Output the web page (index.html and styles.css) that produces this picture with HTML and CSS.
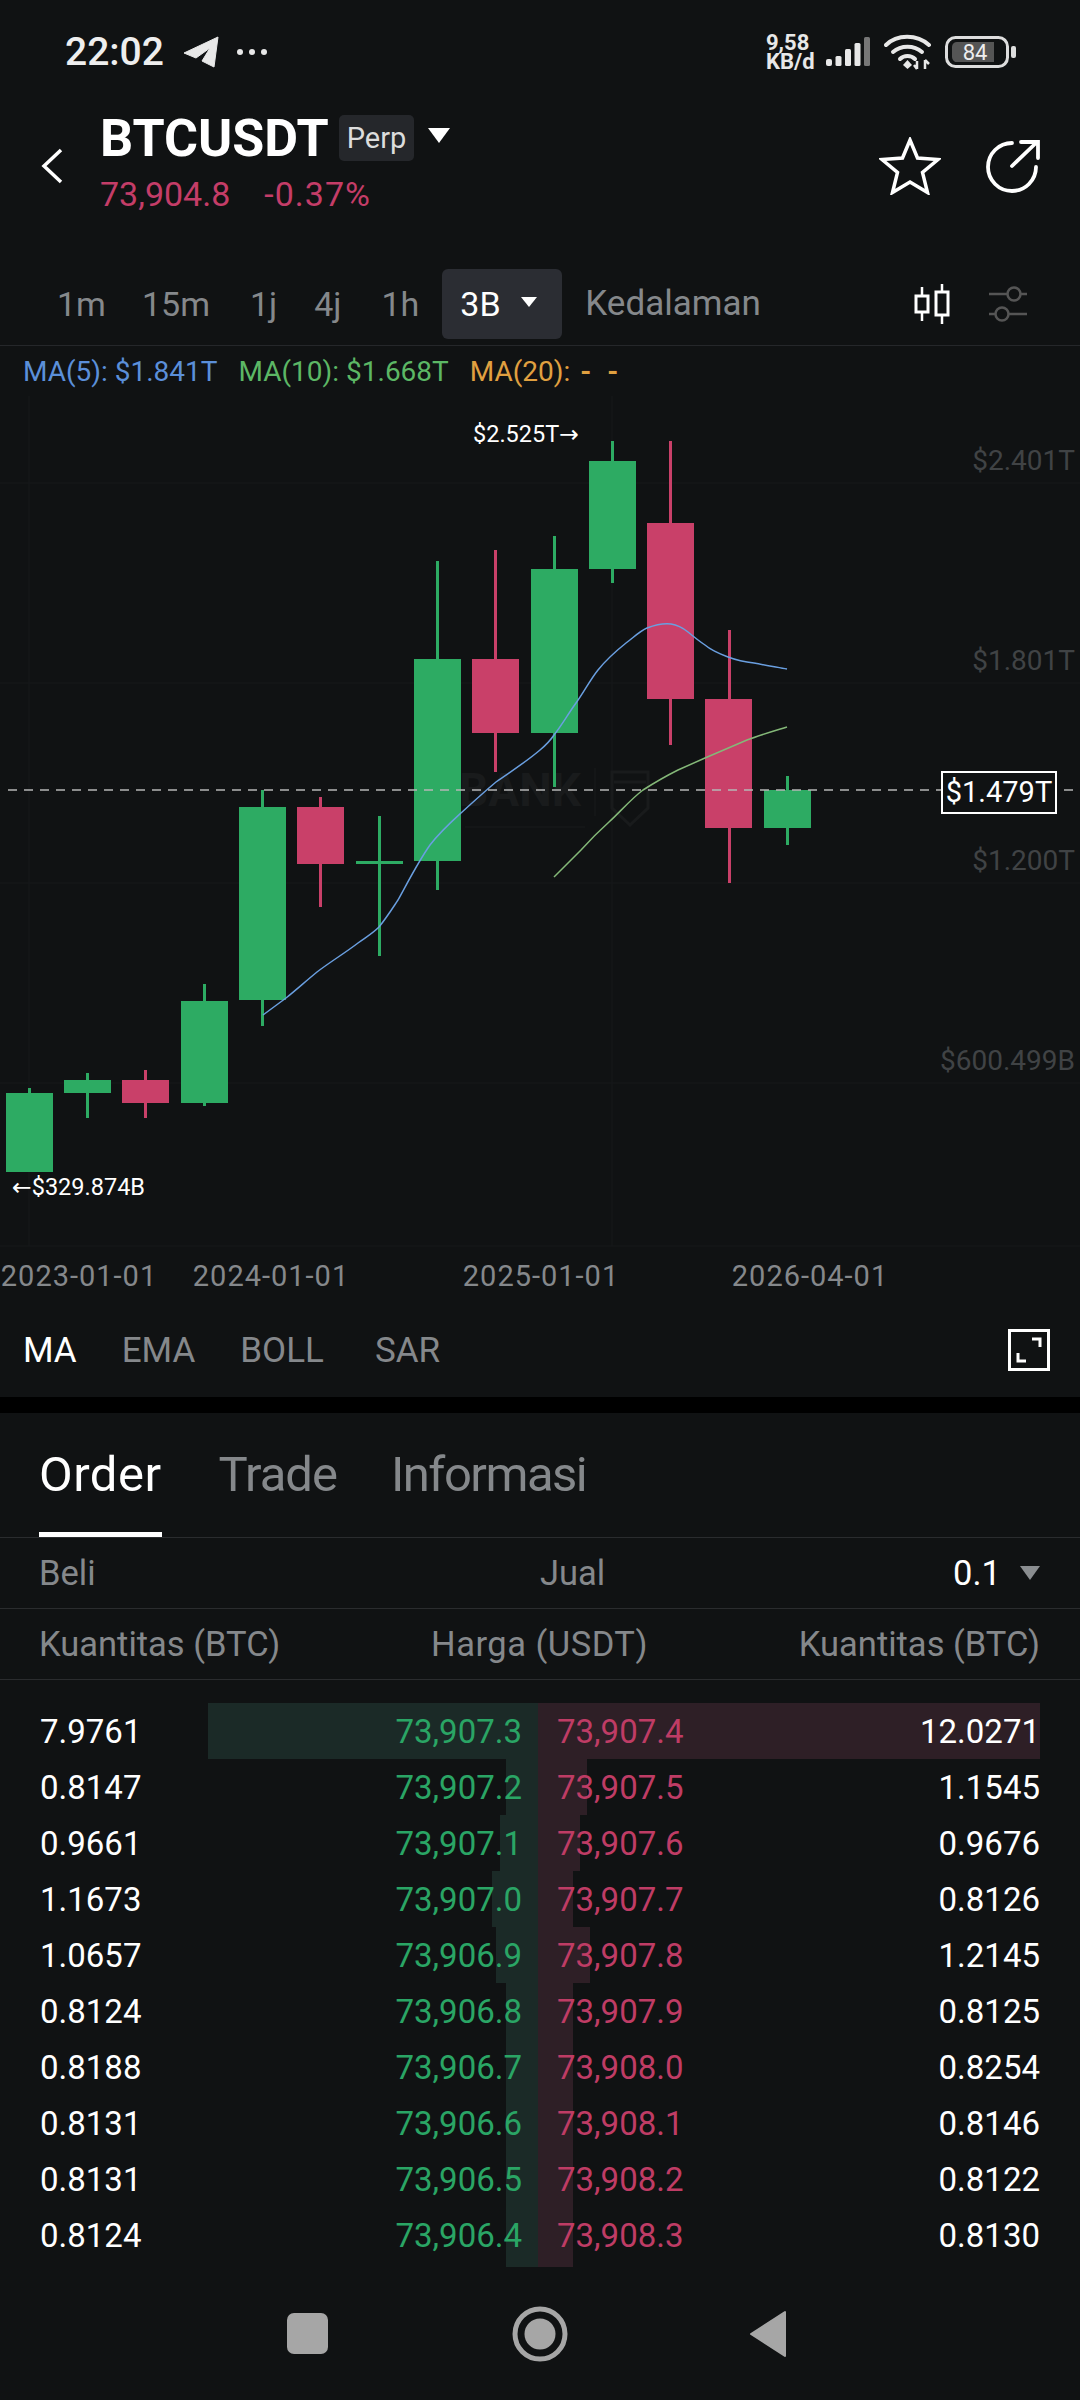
FILE: index.html
```html
<!DOCTYPE html>
<html lang="id">

<head>
    <meta charset="UTF-8">
    <meta name="viewport" content="width=device-width, initial-scale=1.0">
    <title>BTCUSDT Perp</title>
    <link rel="stylesheet" href="styles.css">
</head>

<body>
    <div class="status-bar">
        <span class="clock">22:02</span>
        <svg class="tg-icon" width="36" height="32" viewBox="0 0 36 32">
            <path d="M35 1 L1 17 L13 22 L27 12 L19 25 L31 31 Z" fill="#e8e8e8" stroke="#e8e8e8" stroke-linejoin="round" />
        </svg>
        <svg class="more-icon" width="33" height="8" viewBox="0 0 33 8">
            <circle cx="4" cy="4" r="3" fill="#e8e8e8" />
            <circle cx="16" cy="4" r="3" fill="#e8e8e8" />
            <circle cx="28" cy="4" r="3" fill="#e8e8e8" />
        </svg>
        <div class="status-right">
            <div class="net-speed">
                <div class="net-line">9,58</div>
                <div class="net-line">KB/d</div>
            </div>
            <svg class="signal-icon" width="46" height="30" viewBox="0 0 46 30">
                <rect x="1" y="22" width="6" height="7" rx="2" fill="#e8e8e8" />
                <rect x="10.500" y="19" width="6" height="10" rx="1.500" fill="#e8e8e8" />
                <rect x="20" y="12" width="6" height="17" rx="1.500" fill="#e8e8e8" />
                <rect x="29.500" y="6" width="6" height="23" rx="1.500" fill="#e8e8e8" />
                <rect x="39" y="0" width="6" height="29" rx="1.500" fill="#777" />
            </svg>
            <svg width="48" height="36" viewBox="0 0 48 36">
                <path d="M2 11 C13 0 33 0 45 11" fill="none" stroke="#e8e8e8" stroke-width="4" stroke-linecap="round" />
                <path d="M9 18 C17 11 30 11 38 18" fill="none" stroke="#e8e8e8" stroke-width="4" stroke-linecap="round" />
                <path d="M16 25 C20 21 27 21 31 25" fill="none" stroke="#e8e8e8" stroke-width="4" stroke-linecap="round" />
                <path d="M19 31 L23.500 26 L28 31 L23.500 35 Z" fill="#e8e8e8" />
                <path d="M33 27 V35 M33 35 L30 31 M41 35 V26 M41 26 L45 30" fill="none" stroke="#e8e8e8" stroke-width="2.500" />
            </svg>
            <svg width="71" height="32" viewBox="0 0 71 32">
                <rect x="1.500" y="1.500" width="61" height="29" rx="9" fill="none" stroke="#ddd" stroke-width="3" />
                <path d="M13 6 H49 V26 H13 A5 5 0 0 1 7 21 V11 A5 5 0 0 1 13 6 Z" fill="#555" />
                <text class="batt-text" x="30" y="24" text-anchor="middle">84</text>
                <rect x="66" y="10" width="5" height="12" rx="2" fill="#ddd" />
            </svg>
        </div>
    </div>

    <header class="symbol-head">
        <svg class="back-icon" width="22" height="36" viewBox="0 0 22 36">
            <path d="M20 2 L3 18 L20 34" fill="none" stroke="#fff" stroke-width="3.500" />
        </svg>
        <div class="symbol-info">
            <div class="symbol-line">
                <span class="symbol-name">BTCUSDT</span>
                <span class="perp-badge">Perp</span>
                <span class="caret caret-big"></span>
            </div>
            <div class="symbol-price">
                <span>73,904.8</span>
                <span class="price-change">-0.37%</span>
            </div>
        </div>
        <svg class="star-icon" width="62" height="58" viewBox="0 0 62 58">
            <path d="M31 3 L38.500 21 L59 22.500 L43.500 35.500 L48.500 55.500 L31 45 L13.500 55.500 L18.500 35.500 L3 22.500 L23.500 21 Z" fill="none" stroke="#fff" stroke-width="3.500" stroke-linejoin="miter" />
        </svg>
        <svg class="share-icon" width="56" height="54" viewBox="0 0 56 54">
            <path d="M27 4 A24 24 0 1 0 51 28" fill="none" stroke="#fff" stroke-width="3.800" stroke-linecap="round" />
            <path d="M27 27 L52 3 M36 3 H53 V19" fill="none" stroke="#fff" stroke-width="3.800" stroke-linecap="round" />
        </svg>
    </header>

    <nav class="intervals">
        <span class="iv iv-1m">1m</span>
        <span class="iv iv-15m">15m</span>
        <span class="iv iv-1j">1j</span>
        <span class="iv iv-4j">4j</span>
        <span class="iv iv-1h">1h</span>
        <span class="iv-active">3B<span class="caret caret-small"></span></span>
        <span class="iv iv-depth">Kedalaman</span>
        <svg class="candle-icon" width="38" height="40" viewBox="0 0 38 40">
            <path d="M9 3 V37 M29 0 V40" stroke="#fff" stroke-width="2.500" />
            <rect x="3" y="12" width="12" height="16" fill="#101213" stroke="#fff" stroke-width="3" />
            <rect x="23" y="8" width="12" height="23" fill="#101213" stroke="#fff" stroke-width="3" />
        </svg>
        <svg class="filter-icon" width="40" height="38" viewBox="0 0 40 38">
            <path d="M1 9 H19 M33 9 H39 M1 29 H7 M21 29 H39" stroke="#555" stroke-width="2.500" />
            <circle cx="26" cy="9" r="6.500" fill="none" stroke="#555" stroke-width="2.500" />
            <circle cx="14" cy="29" r="6.500" fill="none" stroke="#555" stroke-width="2.500" />
        </svg>
    </nav>

    <div class="ma-legend">
        <span class="ma-blue">MA(5): $1.841T</span>
        <span class="ma-green">MA(10): $1.668T</span>
        <span class="ma-orange">MA(20): <span class="ma-empty">- -</span></span>
    </div>

    <!-- viewBox keeps page coordinates, so candles read straight from the y values -->
    <svg class="chart" width="1080" height="911" viewBox="0 396 1080 911">
        <g class="grid">
            <path d="M29 396 V1246 M612 396 V1246" />
            <path d="M0 483 H1080 M0 683 H1080 M0 883 H1080 M0 1083 H1080 M0 1246 H1080" />
        </g>

        <g class="watermark">
            <text class="wm-text" x="459" y="806">BANK</text>
            <path d="M595 768 V816 M465 827 H585" stroke="#191b1c" fill="none" />
            <path d="M612 772 H648 V808 L630 825 L612 808 Z M614 782 H646" stroke="#191b1c" stroke-width="3" fill="none" />
        </g>

        <g class="up">
            <rect x="28" y="1088" width="3" height="84" /><rect x="6" y="1093" width="47" height="79" />
            <rect x="86" y="1073" width="3" height="45" /><rect x="64" y="1080" width="47" height="13" />
            <rect x="203" y="984" width="3" height="122" /><rect x="181" y="1001" width="47" height="102" />
            <rect x="261" y="790" width="3" height="236" /><rect x="239" y="807" width="47" height="193" />
            <rect x="378" y="816" width="3" height="140" /><rect x="356" y="861" width="47" height="3" />
            <rect x="436" y="561" width="3" height="329" /><rect x="414" y="659" width="47" height="202" />
            <rect x="553" y="536" width="3" height="251" /><rect x="531" y="569" width="47" height="164" />
            <rect x="611" y="441" width="3" height="142" /><rect x="589" y="461" width="47" height="108" />
            <rect x="786" y="776" width="3" height="69" /><rect x="764" y="790" width="47" height="38" />
        </g>
        <g class="down">
            <rect x="144" y="1070" width="3" height="48" /><rect x="122" y="1080" width="47" height="23" />
            <rect x="319" y="797" width="3" height="110" /><rect x="297" y="807" width="47" height="57" />
            <rect x="494" y="550" width="3" height="222" /><rect x="472" y="659" width="47" height="74" />
            <rect x="669" y="441" width="3" height="304" /><rect x="647" y="523" width="47" height="176" />
            <rect x="728" y="630" width="3" height="253" /><rect x="705" y="699" width="47" height="129" />
        </g>

        <path class="line-ma5" d="M263 1015 L286 998 C296 990 306 981 317 972 C330 962 345 953 358 943 C366 937 372 934 379 927 C387 917 392 909 398 900 C408 882 418 862 430 845 C440 832 450 823 461 813 C472 803 484 792 496 782 C510 772 526 762 540 750 C546 745 550 741 554 735 C562 725 568 714 576 703 C584 692 590 680 598 670 C606 660 616 651 626 643 C634 637 640 631 647 628 C655 625 663 623 671 624 C678 625 683 628 688 632 C694 637 699 641 705 645 C712 651 720 654 728 657 C736 660 745 662 754 663 C764 665 776 667 787 669" />
        <path class="line-ma10" d="M554 877 C563 868 572 859 581 850 C590 840 599 831 609 822 C620 812 631 799 643 790 C654 783 666 776 678 770 C687 766 696 762 705 758 C719 752 733 746 747 740 C760 735 774 731 787 727" />

        <path class="last-line" d="M8 790 H1080" />
        <rect class="last-tag" x="942" y="772" width="114" height="41" />
        <text class="last-text" x="999" y="802" text-anchor="middle">$1.479T</text>

        <text class="axis-y" x="1075" y="470" text-anchor="end">$2.401T</text>
        <text class="axis-y" x="1075" y="670" text-anchor="end">$1.801T</text>
        <text class="axis-y" x="1075" y="870" text-anchor="end">$1.200T</text>
        <text class="axis-y" x="1075" y="1070" text-anchor="end">$600.499B</text>

        <text class="peak" x="473" y="442">$2.525T<tspan class="arrow">→</tspan></text>
        <text class="peak" x="12" y="1195"><tspan class="arrow">←</tspan>$329.874B</text>

        <text class="axis-x" x="79" y="1286" text-anchor="middle">2023-01-01</text>
        <text class="axis-x" x="271" y="1286" text-anchor="middle">2024-01-01</text>
        <text class="axis-x" x="541" y="1286" text-anchor="middle">2025-01-01</text>
        <text class="axis-x" x="810" y="1286" text-anchor="middle">2026-04-01</text>
    </svg>

    <div class="indicators">
        <span class="ind ind-active">MA</span>
        <span class="ind">EMA</span>
        <span class="ind ind-boll">BOLL</span>
        <span class="ind">SAR</span>
        <svg class="expand-icon" width="42" height="42" viewBox="0 0 42 42">
            <rect x="1.500" y="1.500" width="39" height="39" fill="none" stroke="#fff" stroke-width="3" />
            <path d="M24 10 H32 V18 M18 32 H10 V24" fill="none" stroke="#fff" stroke-width="3" />
        </svg>
    </div>

    <div class="gap-black"></div>

    <div class="tabs">
        <span class="tab tab-active">Order</span>
        <span class="tab tab-trade">Trade</span>
        <span class="tab tab-info">Informasi</span>
    </div>

    <div class="book-title">
        <span class="beli">Beli</span>
        <span>Jual</span>
        <span class="step">0.1</span>
        <span class="caret caret-gray"></span>
    </div>

    <div class="book-head">
        <span>Kuantitas (BTC)</span>
        <span class="head-price">Harga (USDT)</span>
        <span>Kuantitas (BTC)</span>
    </div>

    <div class="book">
        <div class="row">
            <div class="side side-buy"><i class="depth" style="width: 330px"></i><span class="qty">7.9761</span><span class="bid">73,907.3</span></div>
            <div class="side side-sell"><i class="depth" style="width: 502px"></i><span class="ask">73,907.4</span><span class="qty">12.0271</span></div>
        </div>
        <div class="row">
            <div class="side side-buy"><i class="depth" style="width: 32px"></i><span class="qty">0.8147</span><span class="bid">73,907.2</span></div>
            <div class="side side-sell"><i class="depth" style="width: 49px"></i><span class="ask">73,907.5</span><span class="qty">1.1545</span></div>
        </div>
        <div class="row">
            <div class="side side-buy"><i class="depth" style="width: 38px"></i><span class="qty">0.9661</span><span class="bid">73,907.1</span></div>
            <div class="side side-sell"><i class="depth" style="width: 42px"></i><span class="ask">73,907.6</span><span class="qty">0.9676</span></div>
        </div>
        <div class="row">
            <div class="side side-buy"><i class="depth" style="width: 46px"></i><span class="qty">1.1673</span><span class="bid">73,907.0</span></div>
            <div class="side side-sell"><i class="depth" style="width: 35px"></i><span class="ask">73,907.7</span><span class="qty">0.8126</span></div>
        </div>
        <div class="row">
            <div class="side side-buy"><i class="depth" style="width: 42px"></i><span class="qty">1.0657</span><span class="bid">73,906.9</span></div>
            <div class="side side-sell"><i class="depth" style="width: 52px"></i><span class="ask">73,907.8</span><span class="qty">1.2145</span></div>
        </div>
        <div class="row">
            <div class="side side-buy"><i class="depth" style="width: 32px"></i><span class="qty">0.8124</span><span class="bid">73,906.8</span></div>
            <div class="side side-sell"><i class="depth" style="width: 35px"></i><span class="ask">73,907.9</span><span class="qty">0.8125</span></div>
        </div>
        <div class="row">
            <div class="side side-buy"><i class="depth" style="width: 32px"></i><span class="qty">0.8188</span><span class="bid">73,906.7</span></div>
            <div class="side side-sell"><i class="depth" style="width: 35px"></i><span class="ask">73,908.0</span><span class="qty">0.8254</span></div>
        </div>
        <div class="row">
            <div class="side side-buy"><i class="depth" style="width: 32px"></i><span class="qty">0.8131</span><span class="bid">73,906.6</span></div>
            <div class="side side-sell"><i class="depth" style="width: 35px"></i><span class="ask">73,908.1</span><span class="qty">0.8146</span></div>
        </div>
        <div class="row">
            <div class="side side-buy"><i class="depth" style="width: 32px"></i><span class="qty">0.8131</span><span class="bid">73,906.5</span></div>
            <div class="side side-sell"><i class="depth" style="width: 35px"></i><span class="ask">73,908.2</span><span class="qty">0.8122</span></div>
        </div>
        <div class="row row-last">
            <div class="side side-buy"><i class="depth" style="width: 32px"></i><span class="qty">0.8124</span><span class="bid">73,906.4</span></div>
            <div class="side side-sell"><i class="depth" style="width: 35px"></i><span class="ask">73,908.3</span><span class="qty">0.8130</span></div>
        </div>
    </div>

    <div class="nav-bar">
        <svg width="41" height="41" viewBox="0 0 41 41">
            <rect width="41" height="41" rx="7" fill="#a6a6a6" />
        </svg>
        <svg width="56" height="56" viewBox="0 0 56 56">
            <circle cx="28" cy="28" r="25" fill="none" stroke="#a6a6a6" stroke-width="5" />
            <circle cx="28" cy="28" r="15.500" fill="#a6a6a6" />
        </svg>
        <svg class="nav-back" width="38" height="48" viewBox="0 0 38 48">
            <path d="M36 2 V46 L2 24 Z" fill="#a6a6a6" stroke="#a6a6a6" stroke-width="2" stroke-linejoin="round" />
        </svg>
    </div>
</body>

</html>
```

FILE: styles.css
```css
* {
    box-sizing: border-box;
}

body {
    margin: 0;
    width: 1080px;
    height: 2400px;
    overflow: hidden;
    background-color: #101213;
    color: #fff;
    font-family: Roboto, "Noto Sans", sans-serif;
}

svg {
    display: block;
    flex-shrink: 0;
}

/* status bar */
.status-bar {
    display: flex;
    align-items: center;
    height: 100px;
    padding: 4px 64px 0 65px;
}

.clock {
    font-size: 39px;
    font-weight: 500;
    color: #eee;
}

.tg-icon {
    margin-left: 19px;
}

.more-icon {
    margin-left: 17px;
}

.status-right {
    display: flex;
    align-items: center;
    gap: 13px;
    margin-left: auto;
}

.net-speed {
    width: 50px;
    margin-right: -4px;
    font-size: 22px;
    font-weight: 700;
    color: #e8e8e8;
}

.net-line {
    line-height: 19px;
}

.batt-text {
    font-size: 22px;
    fill: #eee;
}

/* symbol header */
.symbol-head {
    display: flex;
    align-items: center;
    height: 132px;
    padding: 0 39px 0 41px;
}

.symbol-info {
    margin-left: 37px;
}

.symbol-line {
    display: flex;
    align-items: center;
    height: 56px;
}

.symbol-name {
    font-size: 52px;
    font-weight: 700;
}

.perp-badge {
    margin-left: 10px;
    padding: 0 8px;
    height: 46px;
    line-height: 46px;
    border-radius: 5px;
    background-color: #25272b;
    font-size: 29px;
    color: #ddd;
}

.caret {
    display: inline-block;
    width: 0;
    height: 0;
    border-style: solid;
    border-color: #fff transparent transparent;
}

.caret-big {
    margin: -6px 0 0 14px;
    border-width: 15px 11px 0;
}

.caret-small {
    margin: 0 0 4px 20px;
    border-width: 10px 8px 0;
}

.caret-gray {
    margin-left: 19px;
    border-width: 14px 10px 0;
    border-top-color: #8a8d90;
}

.symbol-price {
    display: flex;
    gap: 34px;
    height: 56px;
    line-height: 56px;
    font-size: 34px;
    color: #c43d68;
}

.price-change {
    letter-spacing: 1px;
}

.star-icon {
    margin-left: auto;
}

.share-icon {
    margin-left: 44px;
}

/* interval row */
.intervals {
    display: flex;
    align-items: center;
    height: 77px;
    margin-top: 37px;
    padding: 0 52px 7px 57px;
    border-bottom: 1px solid #25272a;
    font-size: 34px;
    color: #85888b;
}

.iv-15m {
    margin-left: 36px;
}

.iv-1j {
    margin-left: 40px;
}

.iv-4j {
    margin-left: 37px;
}

.iv-1h {
    margin-left: 40px;
}

.iv-active {
    display: flex;
    align-items: center;
    width: 120px;
    height: 70px;
    margin-left: 23px;
    padding-left: 18px;
    border-radius: 6px;
    background-color: #2b2d33;
    color: #fff;
}

.iv-depth {
    margin-left: 23px;
    font-size: 35px;
}

.candle-icon {
    margin-left: auto;
}

.filter-icon {
    margin-left: 37px;
}

/* chart */
.ma-legend {
    display: flex;
    align-items: center;
    gap: 21px;
    height: 50px;
    padding-left: 23px;
    font-size: 28px;
}

.ma-blue {
    color: #5b8fd9;
}

.ma-green {
    color: #5cb765;
}

.ma-orange {
    color: #e0a040;
}

.ma-empty {
    margin-left: 3px;
    letter-spacing: 3px;
    word-spacing: 3px;
    font-weight: 700;
}

.grid path {
    stroke: #17191a;
    stroke-width: 1;
    fill: none;
}

.wm-text {
    font-size: 46px;
    font-weight: 700;
    fill: #191b1c;
}

.up rect {
    fill: #2dab63;
}

.down rect {
    fill: #c94069;
}

.line-ma5 {
    fill: none;
    stroke: #6a9fe0;
    stroke-width: 1.500;
}

.line-ma10 {
    fill: none;
    stroke: #84b878;
    stroke-width: 1.500;
}

.last-line {
    fill: none;
    stroke: #b5b6b7;
    stroke-width: 1.500;
    stroke-dasharray: 9 7;
}

.last-tag {
    fill: #101213;
    stroke: #fff;
    stroke-width: 2;
}

.last-text {
    font-size: 29px;
    fill: #fff;
}

.axis-y {
    font-size: 28px;
    fill: #404345;
}

.axis-x {
    font-size: 29px;
    letter-spacing: 1px;
    fill: #85888b;
}

.peak {
    font-size: 23.500px;
    fill: #fff;
}

.arrow {
    font-family: "DejaVu Sans", sans-serif;
}

/* indicator row */
.indicators {
    display: flex;
    align-items: center;
    height: 90px;
    padding: 0 30px 4px 23px;
    font-size: 35px;
    color: #85888b;
}

.ind {
    margin-right: 45px;
}

.ind-boll {
    margin-right: 51px;
}

.ind-active {
    color: #fff;
}

.expand-icon {
    margin-left: auto;
}

.gap-black {
    height: 16px;
    background-color: #000;
}

/* order book */
.tabs {
    display: flex;
    align-items: flex-end;
    gap: 57px;
    height: 125px;
    padding: 0 39px;
    border-bottom: 1px solid #2a2c2e;
    font-size: 49px;
    color: #85888b;
}

.tab {
    height: 92px;
    line-height: 60px;
}

.tab-active {
    border-bottom: 5px solid #fff;
    color: #fff;
    letter-spacing: 0.500px;
}

.tab-trade {
    letter-spacing: -1px;
}

.tab-info {
    margin-left: -3px;
    letter-spacing: -1.500px;
}

.book-title {
    display: flex;
    align-items: center;
    height: 71px;
    padding: 0 40px 0 39px;
    border-bottom: 1px solid #2a2c2e;
    font-size: 34.500px;
    color: #85888b;
}

.beli {
    width: 501px;
}

.step {
    margin-left: auto;
    color: #fff;
}

.book-head {
    display: flex;
    justify-content: space-between;
    align-items: center;
    height: 71px;
    padding: 0 40px 0 39px;
    border-bottom: 1px solid #2a2c2e;
    font-size: 34.500px;
    color: #85888b;
}

.head-price {
    letter-spacing: 0.500px;
}

.book {
    padding: 23px 40px 0;
}

.row {
    display: flex;
    height: 56px;
    font-size: 33px;
    line-height: 58px;
}

.row-last {
    height: 60px;
}

.side {
    position: relative;
    display: flex;
    justify-content: space-between;
}

.side span {
    position: relative;
}

.side-buy {
    width: 498px;
    padding-right: 16px;
}

.side-sell {
    width: 502px;
    padding-left: 19px;
}

.depth {
    position: absolute;
    top: 0;
    bottom: 0;
}

.side-buy .depth {
    right: 0;
    background-color: #1b2a27;
}

.side-sell .depth {
    left: 0;
    background-color: #2e1f26;
}

.bid {
    color: #2aa565;
}

.ask {
    color: #bf3c65;
}

.nav-bar {
    display: flex;
    align-items: center;
    justify-content: center;
    gap: 184px;
    height: 133px;
    padding-right: 6px;
}

.nav-back {
    margin-left: -3px;
}
```
